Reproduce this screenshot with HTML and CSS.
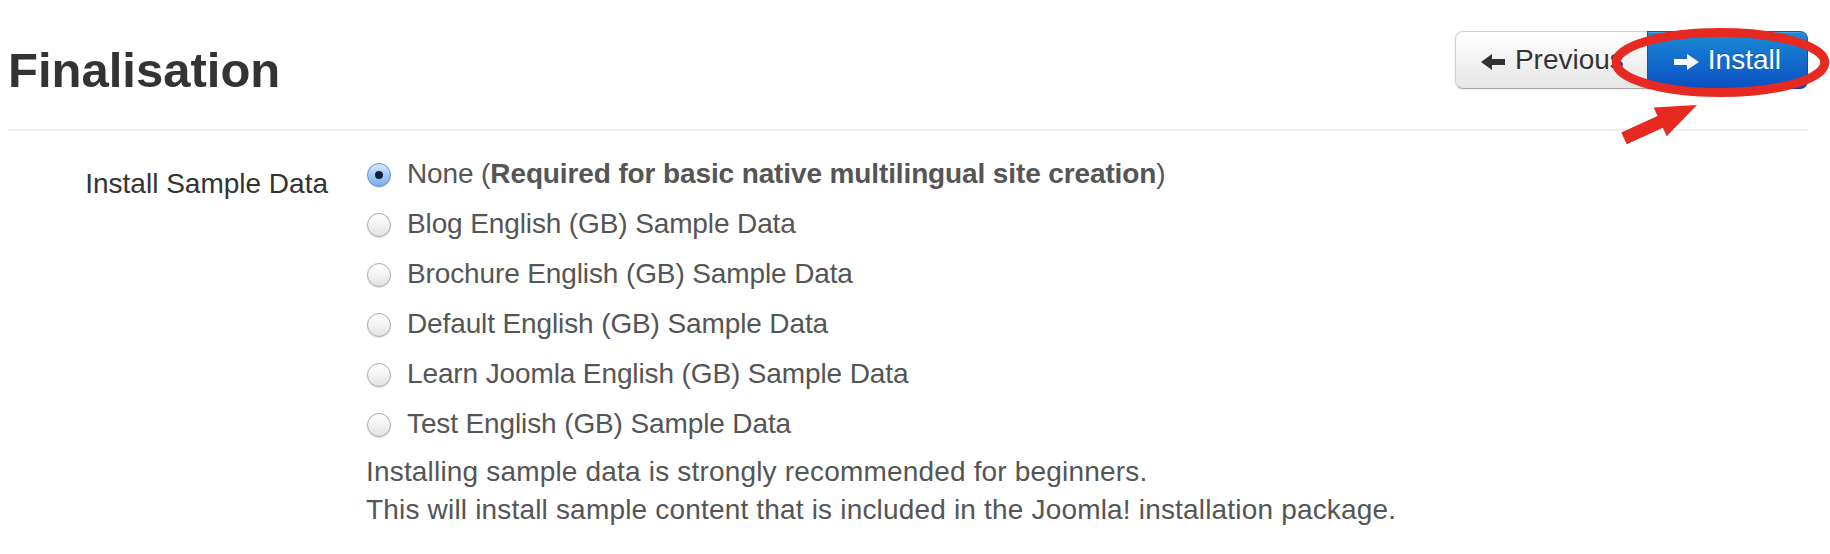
FILE: index.html
```html
<!DOCTYPE html>
<html lang="en">
<head>
<meta charset="utf-8">
<title>Finalisation</title>
<link rel="stylesheet" href="styles.css">
</head>
<body>
<div class="page">
  <div class="header">
    <h1 class="title">Finalisation</h1>
    <div class="btn-group">
      <a class="btn btn-default" href="#">
        <svg class="icon" width="24" height="18" viewBox="0 0 24 18"><polygon points="0,9 11,1 11,6 24,6 24,12 11,12 11,17" fill="#333"/></svg>
        <span>Previous</span>
      </a>
      <a class="btn btn-primary" href="#">
        <svg class="icon icon-right" width="25" height="18" viewBox="0 0 25 18"><polygon points="25,9 13,1 13,6 0,6 0,12 13,12 13,17" fill="#fff"/></svg>
        <span>Install</span>
      </a>
    </div>
  </div>

  <div class="form-row">
    <div class="control-label">Install Sample Data</div>
    <div class="controls">
      <label class="radio"><span class="radio-btn checked"></span><span>None (<b>Required for basic native multilingual site creation</b>)</span></label>
      <label class="radio"><span class="radio-btn"></span><span>Blog English (GB) Sample Data</span></label>
      <label class="radio"><span class="radio-btn"></span><span>Brochure English (GB) Sample Data</span></label>
      <label class="radio"><span class="radio-btn"></span><span>Default English (GB) Sample Data</span></label>
      <label class="radio"><span class="radio-btn"></span><span>Learn Joomla English (GB) Sample Data</span></label>
      <label class="radio"><span class="radio-btn"></span><span>Test English (GB) Sample Data</span></label>
      <p class="help">Installing sample data is strongly recommended for beginners.<br>This will install sample content that is included in the Joomla! installation package.</p>
    </div>
  </div>

  <svg class="annotation" width="1830" height="554" viewBox="0 0 1830 554">
    <ellipse cx="1720.5" cy="62.5" rx="104.3" ry="30" fill="none" stroke="#e62a21" stroke-width="9"/>
    <polygon points="1697,105 1666.7,136.2 1662.9,127.8 1626.7,144.3 1621.3,132.5 1657.5,116 1653.7,107.6" fill="#e62a21"/>
  </svg>
</div>
</body>
</html>
```

FILE: styles.css
```css
html, body {
  margin: 0;
  padding: 0;
  background: #fff;
}

.page {
  position: relative;
  width: 1830px;
  height: 554px;
  overflow: hidden;
  font-family: "Liberation Sans", Arial, Helvetica, sans-serif;
  font-size: 28px;
  color: #333;
}

.header {
  margin: 0 22px 0 8px;
  padding-top: 31px;
  display: flex;
  justify-content: space-between;
  align-items: flex-start;
  border-bottom: 2px solid #eeeeee;
}

.title {
  margin: 10px 0 30px;
  font-size: 49px;
  line-height: 58px;
  font-weight: bold;
  color: #333;
}

.btn-group {
  display: flex;
}

.btn {
  display: flex;
  align-items: center;
  box-sizing: border-box;
  height: 58px;
  font-size: 28px;
  line-height: 32px;
  text-decoration: none;
  border: 1px solid;
}

.btn-default {
  padding: 0 23px 0 25px;
  gap: 10px;
  color: #333;
  text-shadow: 0 1px 1px rgba(255, 255, 255, 0.75);
  background: linear-gradient(to bottom, #ffffff, #e6e6e6);
  border-color: #d0d0d0 #c8c8c8 #a8a8a8 #d0d0d0;
  border-right: 0;
  border-radius: 8px 0 0 8px;
  box-shadow: inset 0 1px 0 rgba(255, 255, 255, 0.2), 0 1px 2px rgba(0, 0, 0, 0.08);
}

.btn-primary {
  padding: 0 26px;
  gap: 9px;
  color: #fff;
  text-shadow: 0 -1px 0 rgba(0, 0, 0, 0.25);
  background: linear-gradient(to bottom, #1a8bd6, #0b4fc2);
  border-color: #0a5ab8 #0a4fb0 #073f95 #0a5ab8;
  border-radius: 0 8px 8px 0;
  box-shadow: inset 0 1px 0 rgba(255, 255, 255, 0.2), 0 1px 2px rgba(0, 0, 0, 0.08);
}

.icon {
  flex: none;
  display: block;
  margin-top: 3px;
}

.form-row {
  display: flex;
  margin: 18px 0 0 8px;
}

.control-label {
  width: 320px;
  flex: none;
  text-align: right;
  padding-top: 10px;
  line-height: 50px;
  color: #333;
}

.controls {
  margin-left: 38px;
  color: #555;
}

.radio {
  display: flex;
  align-items: center;
  height: 50px;
  line-height: 50px;
  white-space: nowrap;
  letter-spacing: -0.12px;
}

.radio b {
  font-weight: bold;
}

.radio-btn {
  flex: none;
  box-sizing: border-box;
  width: 24px;
  height: 24px;
  margin: 2px 16px 0 1px;
  border-radius: 50%;
  border: 1px solid #aaaaaa;
  background: linear-gradient(to bottom, #ffffff 0%, #f3f3f3 50%, #e2e2e2 100%);
  box-shadow: 0 1px 1px rgba(0, 0, 0, 0.12);
  position: relative;
}

.radio-btn.checked {
  border-color: #5d8fd3;
  background: linear-gradient(to bottom, #d9e9fb 0%, #a7cbf5 50%, #77aef0 100%);
}

.radio-btn.checked::after {
  content: "";
  position: absolute;
  left: 50%;
  top: 50%;
  width: 8px;
  height: 8px;
  margin: -4px 0 0 -4px;
  border-radius: 50%;
  background: #10223b;
}

.help {
  margin: 4px 0 0;
  line-height: 38.3px;
  color: #555;
  letter-spacing: 0.18px;
}

.annotation {
  position: absolute;
  left: 0;
  top: 0;
  pointer-events: none;
}
```
